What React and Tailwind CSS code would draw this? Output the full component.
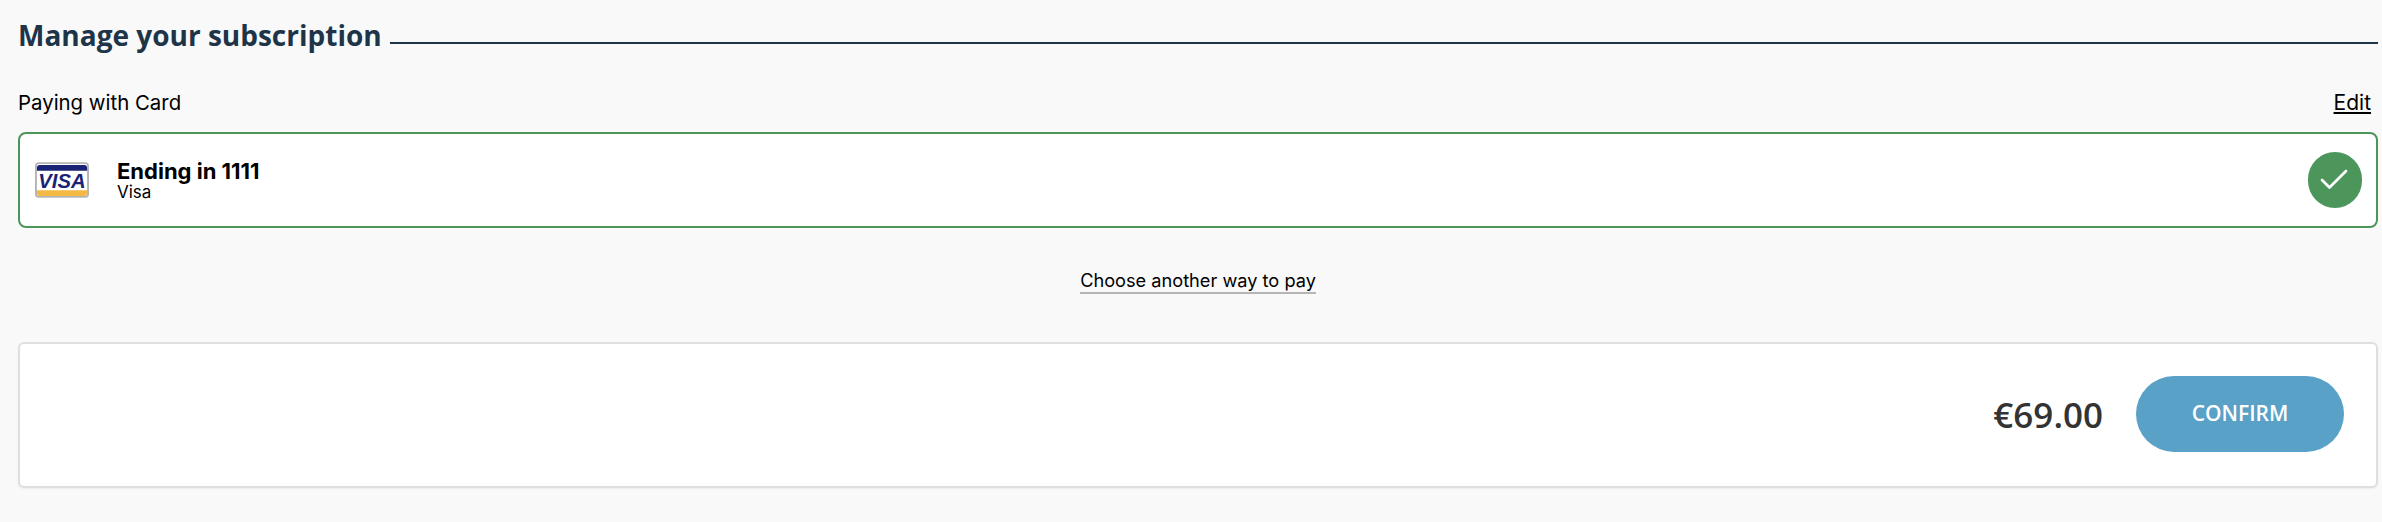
import React from 'react';
import { Check } from 'lucide-react';

const VisaCard = () => (
  <svg width="54" height="36" viewBox="0 0 56 37" className="shrink-0">
    <rect x="1" y="1" width="54" height="35" rx="3" fill="#fff" stroke="#b5b5b5" strokeWidth="2" />
    <path d="M2 6a3 3 0 0 1 3-3h46a3 3 0 0 1 3 3v3H2z" fill="#1a2373" />
    <path d="M2 29h52v3a3 3 0 0 1-3 3H5a3 3 0 0 1-3-3z" fill="#f4b942" />
    <text x="28" y="26.5" textAnchor="middle" fill="#1a2373" className="font-['Liberation_Sans',sans-serif] text-[21px] font-bold italic">VISA</text>
  </svg>
);

const App = () => {
  return (
    <div className="h-[522px] w-full overflow-hidden bg-[#f9f9f9] pr-[4px] pl-[18px] font-['Inter',sans-serif] text-black">
      {/* Title */}
      <div className="flex items-center gap-[8px] pt-[16px]">
        <h1 className="font-['Open_Sans',sans-serif] text-[28px] leading-[38px] font-bold whitespace-nowrap text-[#1e3448]">
          Manage your subscription
        </h1>
        <div className="mt-[15px] h-[2px] flex-1 bg-[#1e3448]"></div>
      </div>

      {/* Payment method */}
      <div className="mt-[37px] flex items-center justify-between">
        <span className="text-[20.4px] leading-[24px]">Paying with Card</span>
        <a className="mr-[7px] text-[21px] leading-[24px] underline underline-offset-2">Edit</a>
      </div>
      <div className="mt-[17px] flex h-[96px] items-center rounded-[8px] border-2 border-[#4c965c] bg-white pr-[14px] pl-[15px]">
        <VisaCard />
        <div className="ml-[28px] flex-1">
          <div className="text-[22px] leading-[24px] font-bold">Ending in 1111</div>
          <div className="text-[17px] leading-[19px]">Visa</div>
        </div>
        <div className="flex h-[56px] w-[54px] items-center justify-center rounded-full bg-[#4c965c]">
          <Check className="mr-[3px] h-[36px] w-[36px] text-white" strokeWidth={1.8} />
        </div>
      </div>

      <div className="mt-[40px] flex justify-center">
        <a className="border-b-2 border-[#b5b5b5] text-[18.2px] leading-[24px]">Choose another way to pay</a>
      </div>

      {/* Total */}
      <div className="mt-[48px] flex h-[146px] items-center justify-end rounded-[6px] border-2 border-[#dfdfdf] bg-white pr-[32px] shadow-xs">
        <span className="font-['Open_Sans',sans-serif] text-[35px] font-semibold text-[#333333]">€69.00</span>
        <button className="mb-[2px] ml-[33px] h-[76px] w-[208px] rounded-full bg-[#5aa1c8] font-['Open_Sans',sans-serif] text-[21px] font-semibold text-white">
          CONFIRM
        </button>
      </div>
    </div>
  );
};

export default App;
